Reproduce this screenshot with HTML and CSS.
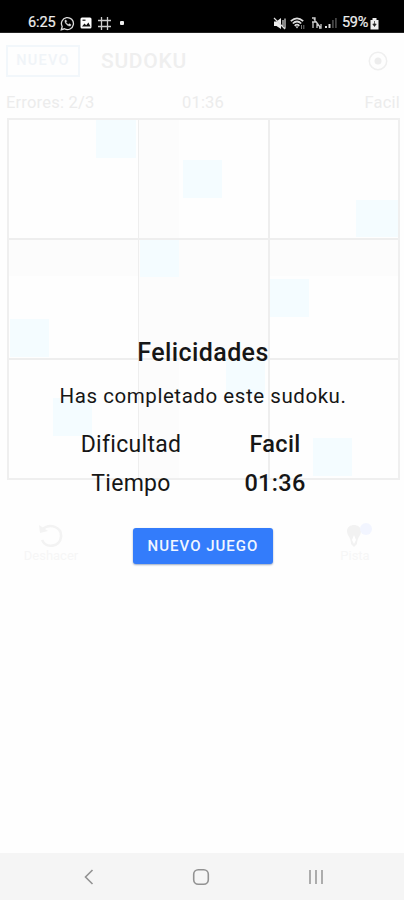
FILE: index.html
```html
<!DOCTYPE html>
<html lang="es">
<head>
<meta charset="utf-8">
<title>Sudoku</title>
<link rel="stylesheet" href="styles.css">
</head>
<body>
<div class="phone">
  <header class="status">
    <div class="status-left">
      <span class="clock">6:25</span>
      <svg width="15" height="15" viewBox="0 0 15 15" fill="none" stroke="#ddd" stroke-width="1.3"><path d="M1.3 13.7l.9-3.2a6 6 0 1 1 2.3 2.3z"/><path d="M5 4.3c-.6 2.7 2.7 6.200 5.500 5.600l.4-1.400-1.700-.8-.9.800C7 8 6.400 7.300 6 6.300l.7-.8L6 4z" fill="#ddd" stroke-width=".5"/></svg>
      <svg width="12" height="12" viewBox="0 0 12 12"><rect x=".5" y=".5" width="11" height="11" rx="1.500" fill="#fff"/><path d="M2 9.500l2.500-3 1.700 1.800 2.200-2.800L10.500 9.500z" fill="#111"/><rect x="2.500" y="2.500" width="3" height="1.500" fill="#444"/></svg>
      <svg width="15" height="15" viewBox="0 0 15 15" stroke="#ccc" stroke-width="1.300"><path d="M4.500 1v13M10.500 1v13M1 4.500h13M1 10.500h13"/></svg>
      <i class="dot"></i>
    </div>
    <div class="status-right">
      <svg width="13" height="13" viewBox="0 0 13 13"><path d="M1 4.500h2.500L8 1v11L3.500 9H1z" fill="#eee"/><path d="M1 1l11 11M10 3v7M12 1.500v10" stroke="#ddd" stroke-width="1.200"/></svg>
      <svg class="wifi" width="15" height="13" viewBox="0 0 15 13" fill="none" stroke="#ddd" stroke-width="1.700"><path d="M.8 4.200Q7 -1.500 13.200 4.200M2.800 6.500Q7 2.500 11.200 6.500M4.700 8.800Q7 6.500 9.300 8.800"/><path d="M5.500 9.500h3L7 11.500z" fill="#ddd" stroke="none"/><path d="M11.500 8v4M13.800 8v4" stroke="#777" stroke-width="1"/></svg>
      <svg class="data" width="11" height="12" viewBox="0 0 11 12" fill="none" stroke="#ccc" stroke-width="1.300"><path d="M1 1h3v4H1M2 5v6M3 2l6 8M6 6v5M8 11h2V7"/></svg>
      <svg class="signal" width="12" height="12" viewBox="0 0 12 12"><path d="M0 9h2v2H0zM3.500 7h2v4h-2z" fill="#ddd"/><path d="M7 3h1.800v8H7zM10 1h1.800v10H10z" fill="#444"/></svg>
      <span class="percent">59%</span>
      <svg width="9" height="13" viewBox="0 0 9 13"><path d="M2.500 1h4v2H8.500v9.500h-8V3h2z" fill="#eee"/><path d="M4.500 4v5M2.800 7h3.400L4.500 9.500z" stroke="#222" fill="#222" stroke-width=".7"/></svg>
    </div>
  </header>

  <main class="game">
    <div class="toolbar">
      <span class="new">NUEVO</span>
      <span class="title">SUDOKU</span>
      <svg class="target" width="20" height="20" viewBox="0 0 20 20"><circle cx="10" cy="10" r="8.700" fill="none" stroke="#efefef" stroke-width="1.500"/><circle cx="10" cy="10" r="3.500" fill="#ededed"/></svg>
    </div>
    <div class="info"><span>Errores: 2/3</span><span>01:36</span><span>Facil</span></div>
    <div class="board">
      <i class="band band-row"></i><i class="band band-col"></i><i class="band band-box"></i>
      <i class="queen q1"></i><i class="queen q2"></i><i class="queen q3"></i>
      <i class="queen q4"></i><i class="queen q5"></i><i class="queen q6"></i>
      <i class="queen q7"></i><i class="queen q8"></i><i class="queen q9"></i>
      <i class="line v1"></i><i class="line v2"></i><i class="line h1"></i><i class="line h2"></i>
    </div>
    <div class="actions">
      <div class="action undo">
        <svg width="26" height="26" viewBox="0 0 26 26" fill="none" stroke="#f3f3f3" stroke-width="2.600"><path d="M4 6.500C12 -.5 24 4 23 14c-1 10-15 12-19 3"/><path d="M1 2l1 8 8-2z" fill="#f3f3f3" stroke="none"/></svg>
        <span>Deshacer</span>
      </div>
      <div class="action hint">
        <svg width="28" height="26" viewBox="0 0 28 26"><path d="M2 8c0-8 14-8 14 0 0 5-4 6-4 13l-3 3-3-3C6 14 2 13 2 8z" fill="#f2f2f2"/><path d="M9 12l2 5-2 4-2-4z" fill="#fff"/><circle cx="21" cy="6" r="6" fill="#f2f5ff"/></svg>
        <span>Pista</span>
      </div>
    </div>
  </main>

  <section class="dialog">
    <h1>Felicidades</h1>
    <p>Has completado este sudoku.</p>
    <dl>
      <dt>Dificultad</dt><dd>Facil</dd>
      <dt>Tiempo</dt><dd>01:36</dd>
    </dl>
    <button>NUEVO JUEGO</button>
  </section>

  <nav class="navbar">
    <svg width="12" height="18" viewBox="0 0 12 18" fill="none" stroke="#929292" stroke-width="1.600"><path d="M9.500 2L2.500 9l7 7"/></svg>
    <svg width="18" height="18" viewBox="0 0 18 18" fill="none" stroke="#929292" stroke-width="1.600"><rect x="1.700" y="1.700" width="14.600" height="14.600" rx="4.500"/></svg>
    <svg width="18" height="18" viewBox="0 0 18 18" stroke="#9b9b9b" stroke-width="1.600"><path d="M3 2v14M9 2v14M15 2v14"/></svg>
  </nav>
</div>
</body>
</html>
```
FILE: styles.css
```css
* { box-sizing: border-box; }
body { margin: 0; background: #fefefe; font-family: Roboto, sans-serif; color: #161616; }
svg { display: block; flex: none; }
.phone { display: grid; grid-template-rows: 33px 820px 47px; grid-template-columns: 404px; width: 404px; height: 900px; overflow: hidden; }

.status { grid-area: 1 / 1; background: #000; border-bottom: 1px solid #222; color: #eee; display: flex; justify-content: space-between; padding: 13px 25px 0 28px; height: 33px; font-size: 14.5px; line-height: 20px; }
.status-left, .status-right { display: flex; align-items: center; height: 20px; }
.status-left { gap: 5px; }
.clock { width: 27px; letter-spacing: -.1px; -webkit-text-stroke: .2px #eee; }
.dot { width: 4px; height: 4px; border-radius: 1px; background: #eee; margin-left: 3px; }
.wifi { margin-left: 4px; }
.data { margin-left: 6px; }
.signal { margin-left: 3px; }
.percent { width: 28px; margin-left: 5px; letter-spacing: -.3px; -webkit-text-stroke: .2px #eee; }

.game { grid-area: 2 / 1; padding: 12px 4px 0 6px; }
.toolbar { display: flex; align-items: center; height: 32px; padding-right: 12px; }
.new { width: 74px; height: 32px; border: 2px solid #f2f7fb; color: #f0f4f8; font-weight: 500; font-size: 14.5px; line-height: 28px; text-align: center; letter-spacing: 1.3px; }
.title { margin-left: 21px; font-size: 21px; font-weight: 500; color: #efefef; letter-spacing: .7px; }
.target { margin-left: auto; }
.info { display: grid; grid-template-columns: 1fr 1fr 1fr; height: 28px; margin: 14px 0 -1px; font-size: 16.5px; line-height: 24px; color: #ececec; letter-spacing: .2px; }
.info span:nth-child(2) { text-align: center; }
.info span:nth-child(3) { text-align: right; }

.board { display: grid; grid-template: repeat(9, 1fr) / repeat(9, 1fr); width: 393px; height: 362px; margin: 0 0 0 1px; border: 2px solid #efefef; }
.band { background: #fcfcfc; }
.band-row { grid-area: 4 / 1 / 5 / 10; margin: 0 0 3px; }
.band-col { grid-area: 1 / 4 / 10 / 5; margin-right: 3px; }
.band-box { grid-area: 4 / 4 / 7 / 7; }
.queen { background: #f4fcff; margin: 0 3px 2px 1px; }
.q1 { grid-area: 1 / 3; }
.q2 { grid-area: 2 / 5; }
.q3 { grid-area: 3 / 9; margin-right: 0; }
.q4 { grid-area: 4 / 4; }
.q5 { grid-area: 5 / 7; }
.q6 { grid-area: 6 / 1; }
.q7 { grid-area: 7 / 6; }
.q8 { grid-area: 8 / 2; }
.q9 { grid-area: 9 / 8; }
.line { background: #eee; margin-left: -1px; }
.v1 { grid-area: 1 / 4 / 10 / 5; width: 1.500px; }
.v2 { grid-area: 1 / 7 / 10 / 8; width: 2px; margin-left: 0; }
.h1 { grid-area: 4 / 1 / 5 / 10; height: 2px; margin: -1px 0 0; }
.h2 { grid-area: 7 / 1 / 8 / 10; height: 2px; margin: -1px 0 0; }

.actions { display: flex; justify-content: space-between; padding: 43px 12px 0 15px; }
.action { display: flex; flex-direction: column; align-items: center; font-size: 13px; line-height: 14px; color: #f6f6f6; }
.undo { width: 60px; }
.hint { width: 50px; margin-right: 8px; }
.hint svg { margin-left: 8px; }

.dialog { grid-area: 2 / 1; z-index: 1; padding: 304px 0 0 2px; display: flex; flex-direction: column; align-items: center; }
h1 { margin: 0; font-size: 25px; line-height: 32px; font-weight: 500; letter-spacing: .4px; }
p { margin: 13px 0 0; font-size: 20.500px; line-height: 28px; letter-spacing: .56px; white-space: nowrap; }
dl { display: grid; grid-template-columns: 144px 144px; grid-auto-rows: 39px; margin: 15px 0 0; text-align: center; font-size: 23px; line-height: 39px; letter-spacing: .3px; }
dd { margin: 0; font-weight: 500; font-size: 23.500px; }
button { width: 140px; height: 36px; margin-top: 25px; padding: 0; border: 0; border-radius: 3px; background: #337cfb; color: #f1f6ff; font: 500 15px/36px Roboto, sans-serif; letter-spacing: 1px; box-shadow: 0 1px 2px #9aa8c0; }

.navbar { grid-area: 3 / 1; background: #f5f5f5; display: flex; justify-content: space-between; align-items: center; padding: 0 79px 0 83px; }
```
